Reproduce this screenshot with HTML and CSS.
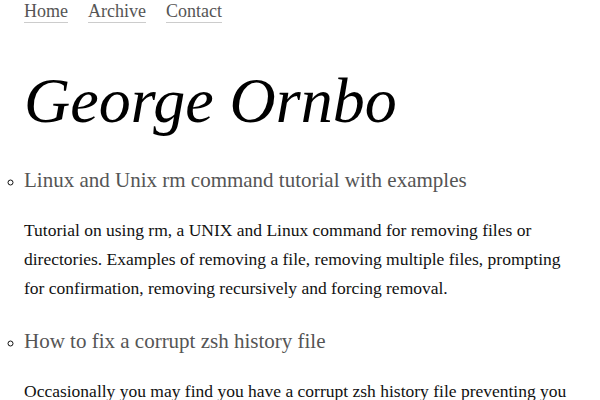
FILE: index.html
```html
<!DOCTYPE html>
<html>
<head>
<meta charset="utf-8">
<link rel="stylesheet" href="styles.css">
</head>
<body>
<div class="page">
  <nav class="nav">
    <a href="#">Home</a>
    <a href="#">Archive</a>
    <a href="#">Contact</a>
  </nav>
  <h1 class="title">George Ornbo</h1>
  <ul class="posts">
    <li>
      <h2 class="post-title"><a href="#">Linux and Unix rm command tutorial with examples</a></h2>
      <p class="summary">Tutorial on using rm, a UNIX and Linux command for removing files or directories. Examples of removing a file, removing multiple files, prompting for confirmation, removing recursively and forcing removal.</p>
    </li>
    <li>
      <h2 class="post-title"><a href="#">How to fix a corrupt zsh history file</a></h2>
      <p class="summary">Occasionally you may find you have a corrupt zsh history file preventing you from using the history. Here is how to fix it.</p>
    </li>
  </ul>
</div>
</body>
</html>
```
FILE: styles.css
```css
html, body { margin: 0; padding: 0; background: #fff; }
body { font-family: "Liberation Serif", serif; color: #111; }
.page { padding: 0 24px; }
.nav { display: flex; gap: 20px; padding-top: 1px; font-size: 18px; line-height: 21px; }
.nav a { color: #555; text-decoration: none; border-bottom: 1px solid #ccc; }
.title { font-style: italic; font-weight: normal; font-size: 64px; line-height: 1; margin: 46px 0 34px; color: #000; }
.posts { list-style: circle; padding: 0; margin: 0; }
.post-title { font-size: 21px; font-weight: normal; margin: 0; line-height: 26px; }
.post-title a { color: #555; text-decoration: none; }
.summary { font-size: 17.5px; line-height: 29px; margin: 23px 0 25px; }
```
